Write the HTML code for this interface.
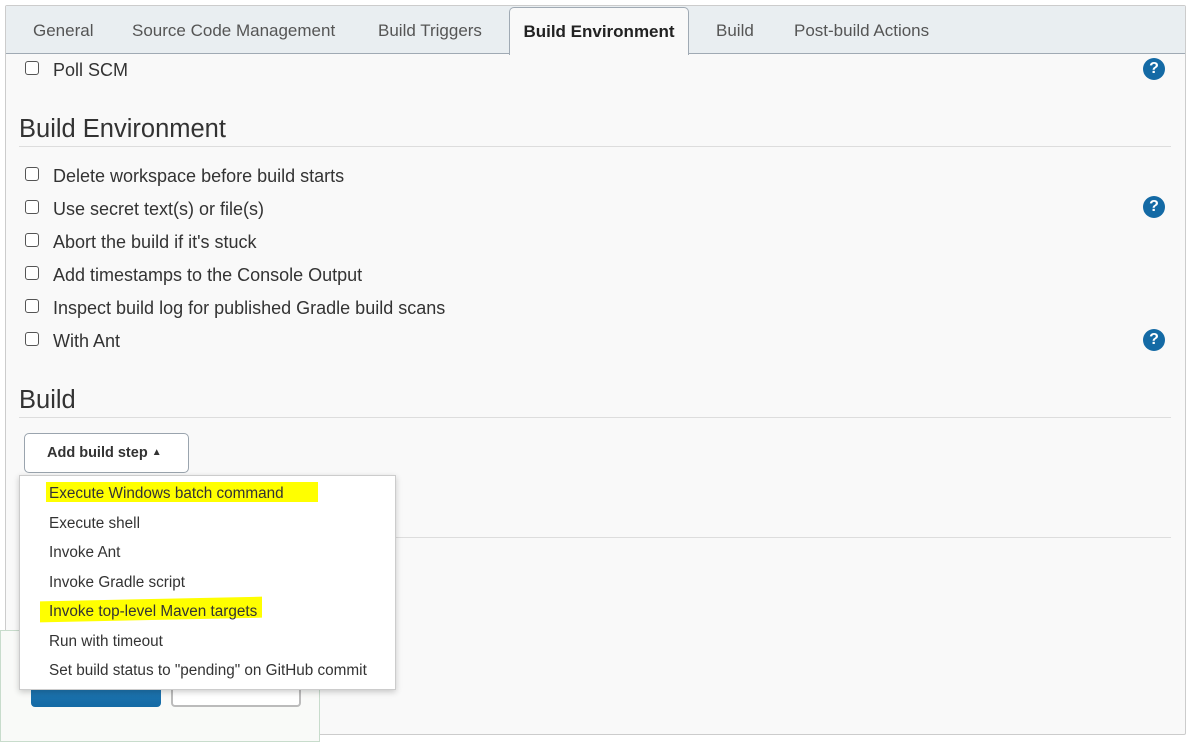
<!DOCTYPE html>
<html><head><meta charset="utf-8"><style>
*{margin:0;padding:0;box-sizing:border-box}
body{width:1186px;height:739px;background:#fff;font-family:"Liberation Sans",sans-serif;color:#333;position:relative;overflow:hidden}
.a{position:absolute;white-space:nowrap}
.panel{position:absolute;left:5px;top:5px;width:1181px;height:730px;background:#f9f9f9;border:1px solid #ccc;border-radius:2px}
.tabbar{position:absolute;left:6px;top:6px;width:1179px;height:48px;background:#e9eef1;border-bottom:1px solid #a0aab4}
.tab{position:absolute;top:21px;font-size:17px;color:#555}
.active{position:absolute;left:509px;top:7px;width:180px;height:48px;background:#f9f9f9;border:1px solid #a0aab4;border-bottom:none;border-radius:5px 5px 0 0;font-weight:bold;font-size:17px;color:#222;text-align:center;padding-top:14px}
.cb{position:absolute;left:25px;width:14px;height:14px;border:1.5px solid #555;border-radius:3px;background:#fff}
.lbl{position:absolute;left:53px;font-size:18px;color:#333;white-space:nowrap}
.help{position:absolute;left:1143px;width:22px;height:22px;border-radius:50%;background:#146aa5;color:#fff;font-weight:bold;font-size:16px;text-align:center;line-height:22px}
.h{position:absolute;left:19px;font-size:25.5px;color:#333}
.line{position:absolute;left:19px;width:1152px;height:1px;background:#ddd}
.mi{position:absolute;left:49px;font-size:15.3px;color:#333;white-space:nowrap}
</style></head><body>
<div class="panel"></div>
<div class="tabbar"></div>
<div class="tab" style="left:33px">General</div>
<div class="tab" style="left:132px">Source Code Management</div>
<div class="tab" style="left:378px">Build Triggers</div>
<div class="active">Build Environment</div>
<div class="tab" style="left:716px">Build</div>
<div class="tab" style="left:794px">Post-build Actions</div>

<div class="cb" style="top:61px"></div><div class="lbl" style="top:60px">Poll SCM</div>
<div class="help" style="top:58px">?</div>

<div class="h" style="top:115px">Build Environment</div>
<div class="line" style="top:146px"></div>
<div class="cb" style="top:167px"></div><div class="lbl" style="top:166px">Delete workspace before build starts</div>
<div class="cb" style="top:200px"></div><div class="lbl" style="top:199px">Use secret text(s) or file(s)</div>
<div class="help" style="top:196px">?</div>
<div class="cb" style="top:233px"></div><div class="lbl" style="top:232px">Abort the build if it's stuck</div>
<div class="cb" style="top:266px"></div><div class="lbl" style="top:265px">Add timestamps to the Console Output</div>
<div class="cb" style="top:299px"></div><div class="lbl" style="top:298px">Inspect build log for published Gradle build scans</div>
<div class="cb" style="top:332px"></div><div class="lbl" style="top:331px">With Ant</div>
<div class="help" style="top:329px">?</div>

<div class="h" style="top:386px">Build</div>
<div class="line" style="top:417px"></div>
<div class="line" style="top:537px"></div>

<div class="a" style="left:24px;top:433px;width:165px;height:40px;border:1.5px solid #9aa4ae;border-radius:5px;background:#fff;font-weight:bold;font-size:14.5px;color:#333;padding:11px 0 0 22px">Add build step <span style="font-size:10px;position:relative;top:-2px">&#9650;</span></div>

<div class="a" style="left:0;top:630px;width:320px;height:112px;border:1px solid #c8dccc;background:#f9faf8"></div>
<div class="a" style="left:31px;top:660px;width:130px;height:47px;background:linear-gradient(#2e86c1,#146aa5);border-radius:4px"></div>
<div class="a" style="left:171px;top:660px;width:130px;height:47px;border:2px solid #bbb;border-radius:4px;background:#fff"></div>

<div class="a" style="left:19px;top:475px;width:377px;height:215px;background:#fff;border:1px solid #ccc;box-shadow:0 2px 6px rgba(0,0,0,.2)"></div>
<div class="a" style="left:46px;top:482px;width:272px;height:20px;background:#ffff00"></div>
<div class="a" style="left:40px;top:599px;width:222px;height:21px;background:#ffff00;transform:skewY(-1.2deg)"></div>
<div class="mi" style="top:485px">Execute Windows batch command</div>
<div class="mi" style="top:515px">Execute shell</div>
<div class="mi" style="top:544px">Invoke Ant</div>
<div class="mi" style="top:574px">Invoke Gradle script</div>
<div class="mi" style="top:603px">Invoke top-level Maven targets</div>
<div class="mi" style="top:633px">Run with timeout</div>
<div class="mi" style="top:662px">Set build status to "pending" on GitHub commit</div>
</body></html>
